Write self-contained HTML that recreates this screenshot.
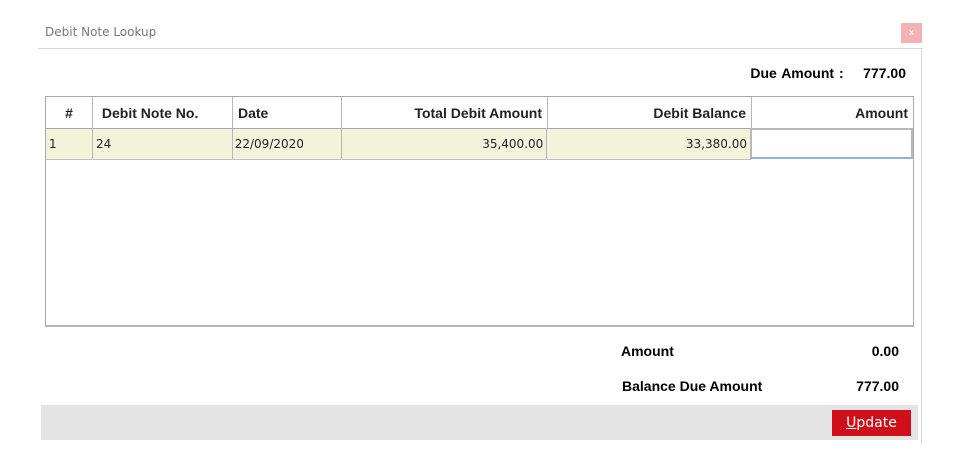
<!DOCTYPE html>
<html><head><meta charset="utf-8"><style>
*{margin:0;padding:0;box-sizing:border-box}
body{width:961px;height:462px;background:#fff;position:relative;overflow:hidden;font-family:"DejaVu Sans","Liberation Sans",sans-serif;color:#000}
.abs{position:absolute}
.title{left:45px;top:25px;font-size:12px;color:#777;font-family:"DejaVu Sans",sans-serif}
.hline{left:38px;top:48px;width:884px;height:1px;background:#d6d6d6}
.vline{left:921px;top:48px;width:1px;height:396px;background:#d6d6d6}
.close{left:901px;top:23px;width:21px;height:20px;background:#f2b3b6;color:#fff;font-size:9px;text-align:center;line-height:20px}
.due{right:55px;top:65px;font-size:14px;font-weight:bold;font-family:"Liberation Sans",sans-serif;word-spacing:1px}
.tbl{left:45px;top:96px;width:869px;height:231px;border:1px solid #a8a8a8;border-bottom:2px solid #b5b5b5;border-right:1px solid #a8a8a8}
.hdr,.row{position:absolute;left:0;height:32px;display:flex}
.hdr{top:0;width:867px;border-bottom:1px solid #a8a8a8}
.row{top:32px;height:31px;width:705px;background:#f3f3dc;border-bottom:1px solid #c0c0c0}
.c{height:100%;border-right:1px solid #b8b8b8;padding:0 5px;display:flex;align-items:center;font-size:13px}
.hdr .c{font-family:"Liberation Sans",sans-serif;font-weight:bold;font-size:14px;color:#222}
.row .c{font-family:"DejaVu Sans",sans-serif;font-size:12px;color:#222}
.r{justify-content:flex-end}
.inp{left:750px;top:128px;width:163px;height:31px;border:2px solid #b8b8b8;border-bottom:2px solid #8fb0d8;background:#fff}
.lab{font-family:"Liberation Sans",sans-serif;font-weight:bold;font-size:14px}
.band{left:41px;top:405px;width:877px;height:35px;background:#e4e4e4}
.btn{left:832px;top:410px;width:79px;height:26px;background:#cf101b;color:#fff;font-size:14px;text-align:center;line-height:26px;font-family:"DejaVu Sans",sans-serif}
</style></head><body>
<div class="abs title">Debit Note Lookup</div>
<div class="abs close">x</div>
<div class="abs hline"></div>
<div class="abs vline"></div>
<div class="abs due">Due Amount :&nbsp;&nbsp;&nbsp; 777.00</div>
<div class="abs tbl">
 <div class="hdr">
  <div class="c" style="width:47px;justify-content:center">#</div>
  <div class="c" style="width:140px">&nbsp;Debit Note No.</div>
  <div class="c" style="width:109px">Date</div>
  <div class="c r" style="width:206px">Total Debit Amount</div>
  <div class="c r" style="width:204px">Debit Balance</div>
  <div class="c r" style="width:161px;border-right:none">Amount</div>
 </div>
 <div class="row">
  <div class="c" style="width:47px;padding-left:3px">1</div>
  <div class="c" style="width:140px;padding-left:3px">24</div>
  <div class="c" style="width:109px;padding-left:2px">22/09/2020</div>
  <div class="c r" style="width:206px;padding-right:3px">35,400.00</div>
  <div class="c r" style="width:204px;padding-right:3px">33,380.00</div>
 </div>
</div>
<div class="abs inp"></div>
<div class="abs lab" style="left:621px;top:343px">Amount</div>
<div class="abs lab" style="right:62px;top:343px">0.00</div>
<div class="abs lab" style="left:622px;top:378px">Balance Due Amount</div>
<div class="abs lab" style="right:62px;top:378px">777.00</div>
<div class="abs band"></div>
<div class="abs btn"><u>U</u>pdate</div>
</body></html>
